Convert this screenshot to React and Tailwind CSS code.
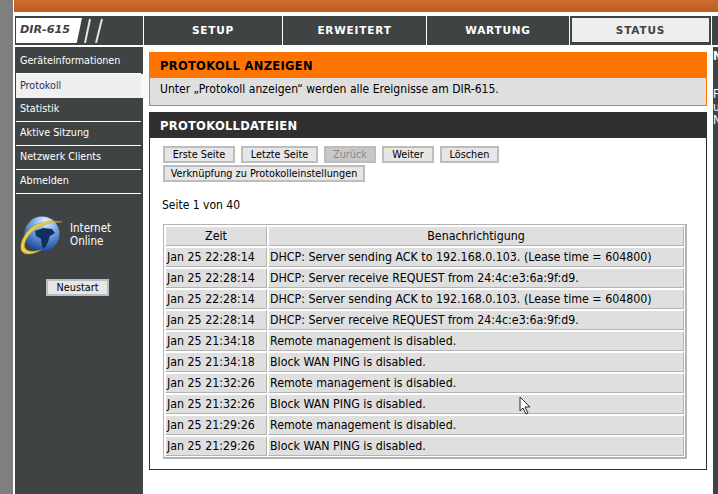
import React from 'react';

const menu = ['Geräteinformationen', 'Protokoll', 'Statistik', 'Aktive Sitzung', 'Netzwerk Clients', 'Abmelden'];
const tabs = [
  { name: 'SETUP', w: 'w-[138px]' },
  { name: 'ERWEITERT', w: 'w-[143px]' },
  { name: 'WARTUNG', w: 'w-[142px]' },
];
const logRows = [
  ['Jan 25 22:28:14', 'DHCP: Server sending ACK to 192.168.0.103. (Lease time = 604800)'],
  ['Jan 25 22:28:14', 'DHCP: Server receive REQUEST from 24:4c:e3:6a:9f:d9.'],
  ['Jan 25 22:28:14', 'DHCP: Server sending ACK to 192.168.0.103. (Lease time = 604800)'],
  ['Jan 25 22:28:14', 'DHCP: Server receive REQUEST from 24:4c:e3:6a:9f:d9.'],
  ['Jan 25 21:34:18', 'Remote management is disabled.'],
  ['Jan 25 21:34:18', 'Block WAN PING is disabled.'],
  ['Jan 25 21:32:26', 'Remote management is disabled.'],
  ['Jan 25 21:32:26', 'Block WAN PING is disabled.'],
  ['Jan 25 21:29:26', 'Remote management is disabled.'],
  ['Jan 25 21:29:26', 'Block WAN PING is disabled.'],
];

const Globe = () => (
  <svg width="42" height="42" viewBox="0 0 42 42">
    <defs>
      <radialGradient id="sea" cx="0.6" cy="0.15" r="0.9">
        <stop offset="0" stopColor="#e8f0fc" />
        <stop offset="0.4" stopColor="#7aabe8" />
        <stop offset="1" stopColor="#123f96" />
      </radialGradient>
    </defs>
    <circle cx="22" cy="20" r="17.5" fill="url(#sea)" />
    <path d="M15 17l8-3 9 1 3 4-5 3-2 6-3 6-3-1-1-8-5-3z" fill="#10305f" />
    <path d="M42 8C32 6 18 8 11 14 4 20 0 29 1 35c1 6 10 7 20 1-8 2-14 2-16-2-2-4 2-12 8-17C20 11 32 8 42 8z" fill="#e7cf4e" stroke="#b79b28" strokeWidth="0.5" />
  </svg>
);

const Btn = ({ children, w, disabled }) => (
  <button className={`${w} h-[17px] p-0 border-2 border-[#bdbdbd] leading-[13px] text-[10.8px] whitespace-nowrap ${disabled ? 'text-[#8a8a8a] bg-[#c8c8c8]' : 'text-black bg-[#e6e6e6]'}`}>
    {children}
  </button>
);

const cell = 'h-5 p-0 bg-[#dfdfdf] border border-t-white border-l-white border-r-[#b4b4b4] border-b-[#b4b4b4] whitespace-nowrap text-[12.3px] leading-4';

export default function App() {
  return (
    <div className="relative w-[718px] h-[494px] overflow-hidden flex bg-white font-['DejaVu_Sans_Condensed','DejaVu_Sans',sans-serif] [font-stretch:condensed] text-[11.5px] text-black">
      <div className="w-[13px] shrink-0 bg-[#7f7f7f]" />
      <div className="w-[705px] shrink-0 flex flex-col">
        <div className="h-3 ml-px shrink-0 bg-gradient-to-b from-[#cc6e2e] to-[#bd5a22]" />
        <div className="h-[33px] ml-[2px] mt-1 flex shrink-0 bg-white">
          <div className="w-[128px] h-[29px] bg-[#404344] flex items-center pl-px">
            <div className="w-[66px] h-[25px] bg-white flex items-center pl-1 [clip-path:polygon(0_0,100%_0,92%_100%,0_100%)]">
              <span className="font-['DejaVu_Sans'] [font-stretch:normal] italic font-bold text-[11.2px] text-[#404344]">DIR-615</span>
            </div>
            <svg width="24" height="25" viewBox="0 0 24 25" className="ml-px">
              <path d="M7 1L2 25M19 1L13 25" stroke="#e4e4e4" strokeWidth="2" />
            </svg>
          </div>
          {tabs.map((t) => (
            <div key={t.name} className={`${t.w} h-[29px] pt-px ml-px bg-[#404344] flex items-center justify-center font-['DejaVu_Sans'] [font-stretch:normal] font-bold text-[10.5px] tracking-[0.8px] text-white`}>
              {t.name}
            </div>
          ))}
          <div className="w-[141px] h-[29px] ml-px bg-[#404344] p-[2px_2px_3px_2px] flex">
            <div className="flex-1 pt-[2px] bg-[#efefef] flex items-center justify-center font-['DejaVu_Sans'] [font-stretch:normal] font-bold text-[10.5px] tracking-[0.8px] text-[#404344]">
              STATUS
            </div>
          </div>
          <div className="flex-1 h-[29px] ml-px bg-[#404344]" />
        </div>
        <div className="flex-1 flex min-h-0">
          <div className="w-[128px] ml-[2px] -mt-[2px] shrink-0 bg-[#404344] flex flex-col pt-[3px]">
            <div className="pl-px pr-[2px] text-[10.7px]">
              {menu.map((m) => (
                <div key={m} className={`h-6 pl-1 flex items-center ${m === 'Protokoll' ? "relative bg-[#efefef] text-[#303060] after:content-[''] after:absolute after:left-full after:inset-y-0 after:w-[8px] after:bg-[#f8f8f8]" : 'text-white border-b border-white'}`}>
                  {m}
                </div>
              ))}
            </div>
            <div className="flex items-center mt-[20px] pl-[5px] gap-[8px]">
              <Globe />
              <div className="text-white leading-[13px]">Internet<br />Online</div>
            </div>
            <div className="flex justify-center mt-[23px] pr-[3px]">
              <Btn w="w-[63px]">Neustart</Btn>
            </div>
          </div>
          <div className="w-[558px] ml-[6px] mt-[3px] shrink-0">
            <div className="border border-[#ff7300] h-[54px] bg-[#dfdfdf]">
              <div className="h-[25px] pt-[2px] bg-[#ff7300] flex items-center pl-[10px] font-['DejaVu_Sans'] [font-stretch:normal] font-bold text-[11.5px] tracking-[0.3px]">
                PROTOKOLL ANZEIGEN
              </div>
              <div className="pl-[10px] h-[23px] flex items-center text-[12.05px]">
                Unter „Protokoll anzeigen“ werden alle Ereignisse am DIR-615.
              </div>
            </div>
            <div className="mt-[6px] border border-[#303030] h-[358px]">
              <div className="h-[25px] pt-[2px] bg-[#303030] flex items-center pl-[10px] font-['DejaVu_Sans'] [font-stretch:normal] font-bold text-[11.5px] tracking-[0.3px] text-white">
                PROTOKOLLDATEIEN
              </div>
              <div className="pl-[13px] pt-2 flex flex-col gap-[2px]">
                <div className="flex gap-[6px]">
                  <Btn w="w-[72px]">Erste Seite</Btn>
                  <Btn w="w-[77px]">Letzte Seite</Btn>
                  <Btn w="w-[52px]" disabled>Zurück</Btn>
                  <Btn w="w-[52px]">Weiter</Btn>
                  <Btn w="w-[59px]">Löschen</Btn>
                </div>
                <div className="flex"><Btn w="w-[202px]">Verknüpfung zu Protokolleinstellungen</Btn></div>
              </div>
              <div className="pl-3 mt-[16px] text-[12px] leading-[14px]">Seite 1 von 40</div>
              <table className="ml-[13px] mt-[12px] w-[524px] border-separate border-spacing-[1px] border border-b-2 border-r-2 border-[#b4b4b4] table-fixed">
                <thead>
                  <tr>
                    <th className={`${cell} w-[102px] font-normal`}>Zeit</th>
                    <th className={`${cell} font-normal`}>Benachrichtigung</th>
                  </tr>
                </thead>
                <tbody>
                  {logRows.map((r, i) => (
                    <tr key={i}>
                      <td className={`${cell} pl-px`}>{r[0]}</td>
                      <td className={`${cell} pl-px`}>{r[1]}</td>
                    </tr>
                  ))}
                </tbody>
              </table>
            </div>
          </div>
          <div className="w-[5px] ml-[6px] -mt-[2px] pt-[3px] shrink-0 bg-[#404344] text-[12px] leading-[13px] text-white overflow-hidden whitespace-nowrap">
            <div className="font-bold">N</div>
            <div className="mt-[25px]">F</div>
            <div>u</div>
            <div>N</div>
          </div>
        </div>
      </div>
      <svg className="absolute left-[519px] top-[396px]" width="13" height="20" viewBox="0 0 13 20">
        <path d="M1 1v14l3-3 3 6 2-1-3-6h5z" fill="#fff" stroke="#222" strokeWidth="1" />
      </svg>
    </div>
  );
}
